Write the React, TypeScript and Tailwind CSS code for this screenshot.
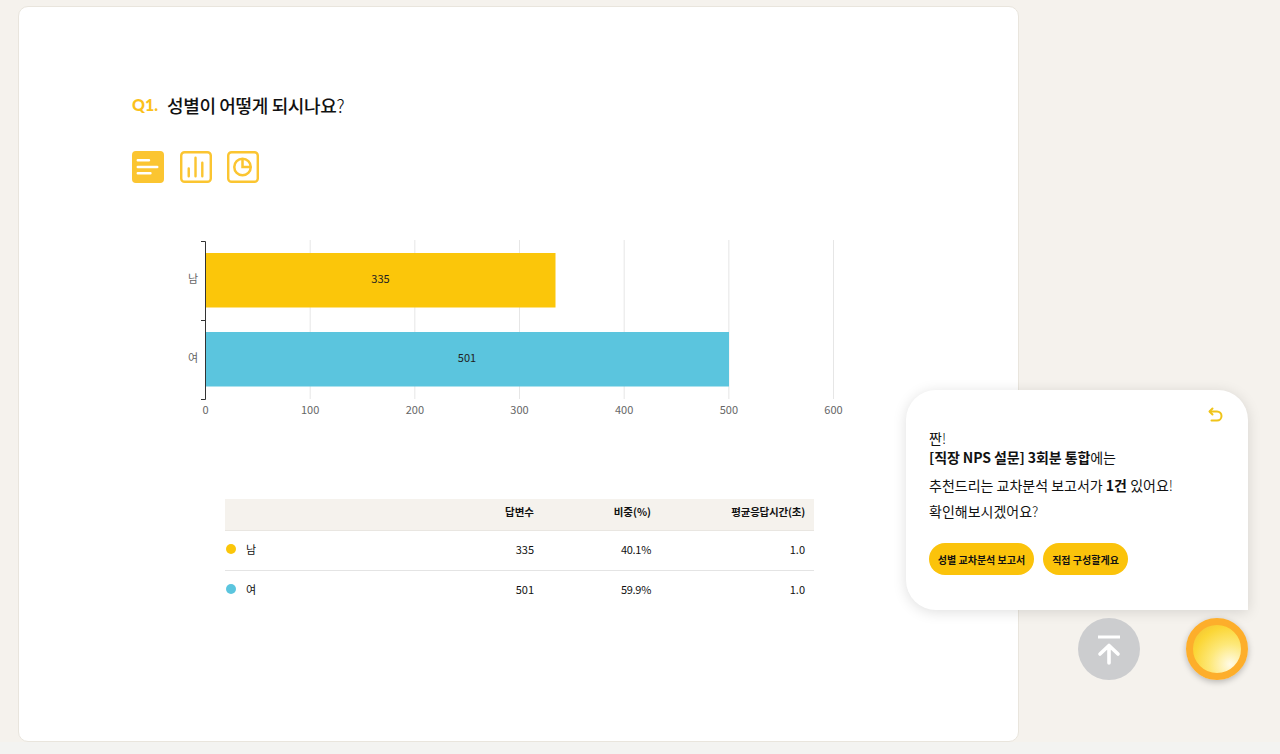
const font = '"Noto Sans CJK KR", "Noto Sans", sans-serif';

const rows = [
  { label: "남", color: "bg-[#fbc60a]", count: "335", ratio: "40.1%", time: "1.0" },
  { label: "여", color: "bg-[#5bc5de]", count: "501", ratio: "59.9%", time: "1.0" },
];

function BarChart() {
  const ticks = [0, 100, 200, 300, 400, 500, 600];
  const x = (v: number) => 205.5 + v * 1.0467;
  return (
    <svg width="720" height="190" viewBox="160 230 720 190" className="block">
      {ticks.slice(1).map((t) => (
        <line key={t} x1={x(t)} x2={x(t)} y1="240" y2="399" stroke="#e6e6e6" strokeWidth="1" />
      ))}
      <rect x="205" y="253" width="350.5" height="54.5" fill="#fbc60a" />
      <rect x="205" y="332" width="524" height="54.5" fill="#5bc5de" />
      <path d="M201 241.5H205.5V399.5H201M201 320.5H205.5" fill="none" stroke="#333" strokeWidth="1" />
      <g fontSize="11" fill="#222" textAnchor="middle">
        <text x="380.5" y="283">335</text>
        <text x="467" y="362">501</text>
      </g>
      <g fontSize="11" fill="#666" textAnchor="end">
        <text x="198" y="283">남</text>
        <text x="198" y="362">여</text>
      </g>
      <g fontSize="11" fill="#666" textAnchor="middle">
        {ticks.map((t) => (
          <text key={t} x={x(t)} y="414">{t}</text>
        ))}
      </g>
    </svg>
  );
}

export default function App() {
  return (
    <div className="relative h-[754px] overflow-hidden bg-[#f5f2ed]" style={{ fontFamily: font }}>
      {/* Survey card */}
      <div className="absolute left-0 right-0 bottom-0 h-[12px] bg-[#f3f3f1]" />
      <div className="relative ml-[18px] pt-[6px] w-[1001px]">
        <div className="h-[736px] rounded-[10px] border border-[#e9e5dd] bg-white pl-[113px] pt-[86px]">
          <div className="flex items-center h-[24px]">
            <span className="w-[35px] text-[16px] font-black leading-none text-[#fbc11b]" style={{ fontFamily: "Lato, sans-serif" }}>Q1.</span>
            <span className="text-[18px] font-medium leading-none tracking-[-0.35px] text-[#111]">성별이 어떻게 되시나요<span className="font-light">?</span></span>
          </div>

          <div className="mt-[34px] flex gap-[15.5px]">
            <svg width="32" height="32" viewBox="0 0 33 33">
              <rect width="33" height="33" rx="4" fill="#fbc531" />
              <path d="M6 9.5H17.5M6 16.5H26M6 23H19" stroke="#fff" strokeWidth="2.6" strokeLinecap="round" />
            </svg>
            <svg width="32" height="32" viewBox="0 0 33 33" fill="none">
              <rect x="1.25" y="1.25" width="30.5" height="30.5" rx="3.5" stroke="#fbc531" strokeWidth="2.5" />
              <path d="M9 18V26M16 7V26M23 12V26" stroke="#fbc531" strokeWidth="2.5" strokeLinecap="round" />
            </svg>
            <svg width="32" height="32" viewBox="0 0 33 33" fill="none">
              <rect x="1.25" y="1.25" width="30.5" height="30.5" rx="3.5" stroke="#fbc531" strokeWidth="2.5" />
              <circle cx="16" cy="16.5" r="8.5" stroke="#fbc531" strokeWidth="2.6" />
              <path d="M16 8V16.5H24.5" stroke="#fbc531" strokeWidth="2.6" />
            </svg>
          </div>

          <div className="mt-[47px] ml-[28px]">
            <BarChart />
          </div>

          <table className="mt-[79px] ml-[93px] w-[589px] border-collapse text-[11px] text-[#111]">
            <thead>
              <tr className="h-[31px] bg-[#f5f2ed] border-b border-[#e9e6e1]">
                <th className="w-[210px]" />
                <th className="w-[99px] pb-[5px] text-right text-[10.5px] font-bold">답변수</th>
                <th className="w-[117px] pb-[5px] text-right text-[10.5px] font-bold">비중(%)</th>
                <th className="pb-[5px] pr-[9px] text-right text-[10.5px] font-bold tracking-[-0.2px]">평균응답시간(초)</th>
              </tr>
            </thead>
            <tbody>
              {rows.map((r, i) => (
                <tr key={r.label} className={i === 0 ? "h-[40px] border-b border-[#e4e4e4]" : "h-[39px]"}>
                  <td className="pb-[2px]">
                    <div className="flex items-center gap-[10px] pl-[1px]">
                      <span className={`h-[10px] w-[10px] rounded-full ${r.color}`} />
                      {r.label}
                    </div>
                  </td>
                  <td className="pb-[2px] text-right">{r.count}</td>
                  <td className="pb-[2px] text-right tracking-[-0.3px]">{r.ratio}</td>
                  <td className="pb-[2px] pr-[9px] text-right">{r.time}</td>
                </tr>
              ))}
            </tbody>
          </table>
        </div>
      </div>

      {/* Floating chat popup */}
      <div className="absolute left-[906px] top-[390px] h-[220px] w-[342px] rounded-t-[30px] rounded-bl-[30px] bg-white pl-[23px] pt-[39px] text-[14px] text-[#111] shadow-[0_2px_14px_rgba(0,0,0,0.13)]">
        <svg className="absolute right-[25px] top-[17px]" width="16" height="16" viewBox="0 0 16 16" fill="none" stroke="#f0c419" strokeWidth="2" strokeLinecap="round" strokeLinejoin="round">
          <path d="M5.5 1.5L2.5 4.5L5.5 7.5" />
          <path d="M3 4.5H10A3.8 3.8 0 0 1 10 13.5H4.5" />
        </svg>
        <p className="leading-[19px]">짠<span className="font-light">!</span></p>
        <p className="leading-[19px] tracking-[-0.1px]"><b className="font-bold">[직장 NPS 설문] 3회분 통합</b>에는</p>
        <p className="mt-[8px] pt-[1px] leading-[19px]">추천드리는 교차분석 보고서가 <b className="font-bold">1건</b> 있어요<span className="font-light">!</span></p>
        <p className="mt-[7px] leading-[19px]">확인해보시겠어요<span className="font-light">?</span></p>
        <div className="mt-[22px] flex gap-[9px] text-[10px] font-bold">
          <button className="h-[32px] w-[105px] rounded-full bg-[#fbc30b]">성별 교차분석 보고서</button>
          <button className="h-[32px] w-[85px] rounded-full bg-[#fbc30b]">직접 구성할게요</button>
        </div>
      </div>

      <div className="absolute left-[1078px] top-[618px] flex h-[62px] w-[62px] items-center justify-center rounded-full bg-[#cccdcf]">
        <svg width="24" height="32" viewBox="0 0 24 32" fill="none" stroke="#fff" strokeWidth="3.6" strokeLinecap="round" strokeLinejoin="round">
          <path d="M1 4H23" strokeLinecap="butt" strokeWidth="3" />
          <path d="M12 30V13M3 21L12 12.5L21 21" />
        </svg>
      </div>
      <div className="absolute left-[1186px] top-[618px] h-[62px] w-[62px] rounded-full border-[7.5px] border-[#fdae2b] bg-[radial-gradient(circle_at_78%_82%,#fffbe8_0%,#fde878_38%,#fbd636_70%,#eebc34_100%)] shadow-[0_2px_6px_rgba(0,0,0,0.25)]" />
    </div>
  );
}
